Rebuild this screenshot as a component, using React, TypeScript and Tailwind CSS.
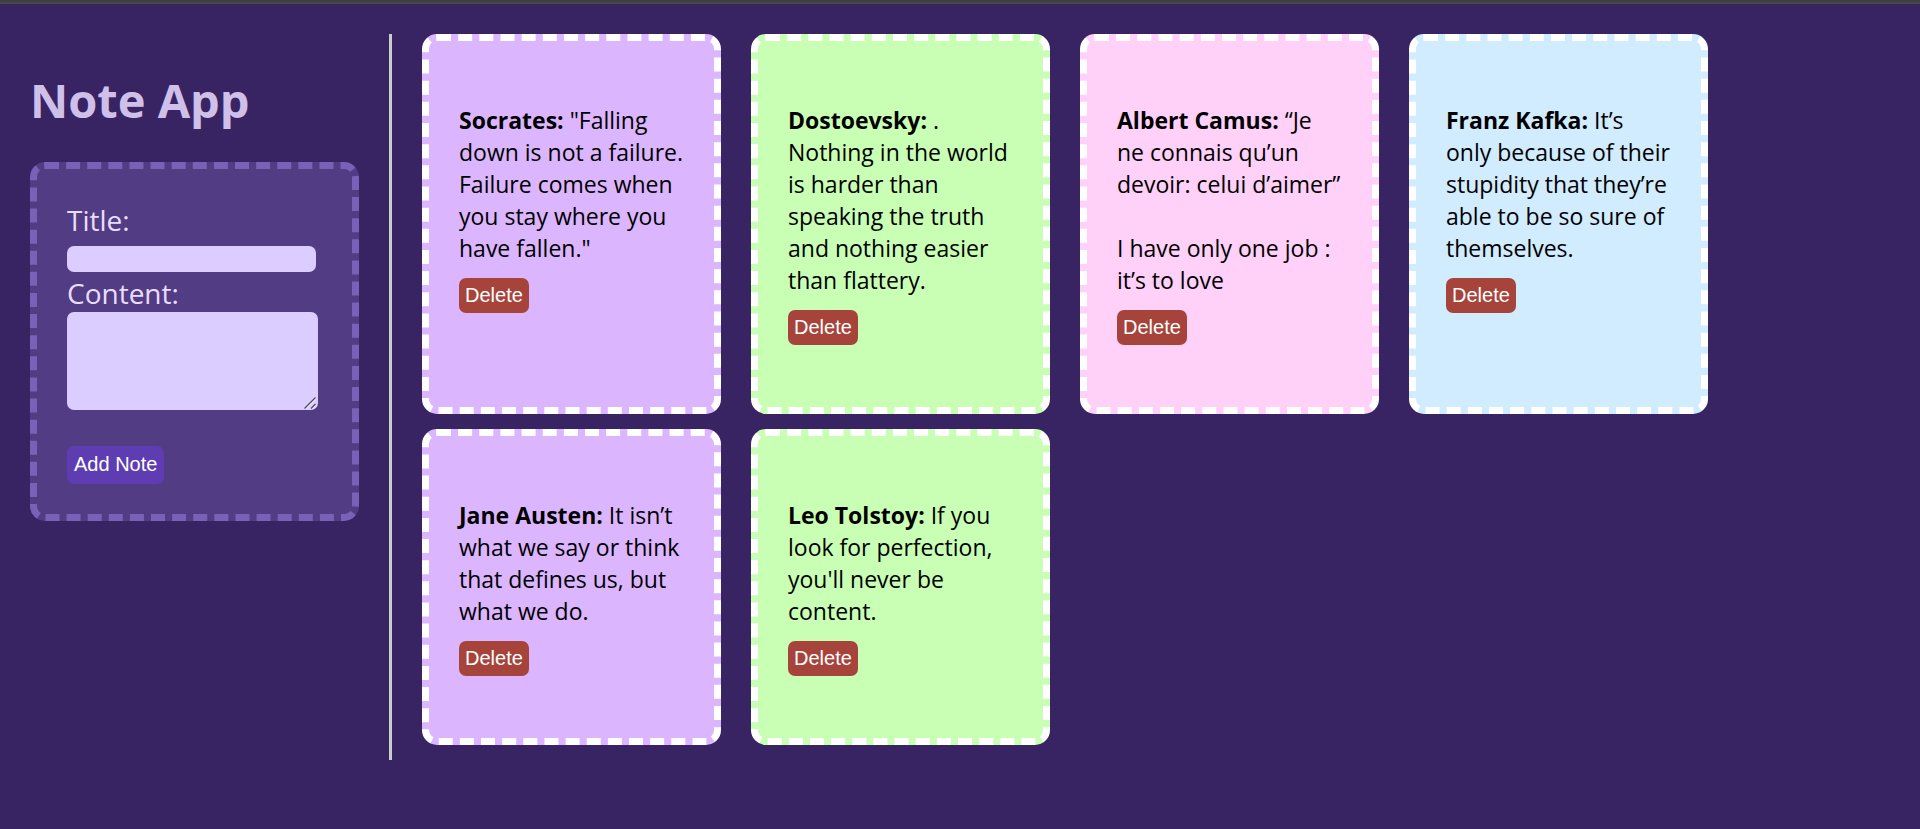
import { useState } from "react";
import type { FormEvent } from "react";

type Note = { id: number; title: string; content: string };

const initialNotes: Note[] = [
  {
    id: 1,
    title: "Socrates",
    content:
      '"Falling down is not a failure. Failure comes when you stay where you have fallen."',
  },
  {
    id: 2,
    title: "Dostoevsky",
    content:
      ".\nNothing in the world is harder than speaking the truth and nothing easier than flattery.",
  },
  {
    id: 3,
    title: "Albert Camus",
    content:
      "“Je ne connais qu’un devoir: celui d’aimer”\n\nI have only one job : it’s to love",
  },
  {
    id: 4,
    title: "Franz Kafka",
    content:
      "It’s only because of their stupidity that they’re able to be so sure of themselves.",
  },
  {
    id: 5,
    title: "Jane Austen",
    content: "It isn’t what we say or think that defines us, but what we do.",
  },
  {
    id: 6,
    title: "Leo Tolstoy",
    content: "If you look for perfection, you'll never be content.",
  },
];

const cardColors = ["bg-[#dcb5ff]", "bg-[#c8ffb5]", "bg-[#ffd1f8]", "bg-[#d1ebff]"];

function NoteCard({
  note,
  color,
  onDelete,
}: {
  note: Note;
  color: string;
  onDelete: () => void;
}) {
  return (
    <article
      className={`rounded-[15px] border-[7px] border-dashed border-white px-[30px] pt-[63px] pb-[62px] ${color}`}
    >
      <p className="text-[23px] leading-8 whitespace-pre-line text-black">
        <strong className="font-bold">{note.title}:</strong> {note.content}
      </p>
      <button
        type="button"
        onClick={onDelete}
        className="mt-3.5 block rounded-[7px] bg-[#a6443c] p-1.5 font-['Liberation_Sans',sans-serif] text-xl leading-[23px] text-white"
      >
        Delete
      </button>
    </article>
  );
}

export default function App() {
  const [notes, setNotes] = useState(initialNotes);
  const [title, setTitle] = useState("");
  const [content, setContent] = useState("");

  const addNote = (event: FormEvent) => {
    event.preventDefault();
    if (!title && !content) return;
    setNotes([...notes, { id: Date.now(), title, content }]);
    setTitle("");
    setContent("");
  };

  return (
    <div className="min-h-screen border-t-2 border-[#3f3f3f] bg-[#392463] font-['Open_Sans',sans-serif]">
      <div className="flex items-stretch border-t-2 border-[#484848] p-[30px]">
        <aside className="shrink-0 border-r-[3px] border-[#cccccc] pr-[30px]">
          <h1 className="mt-[34px] mb-[30px] text-[47px] leading-16 font-bold text-[#cfc0ea]">
            Note App
          </h1>
          <form
            onSubmit={addNote}
            className="flex w-[329px] flex-col items-start rounded-[15px] border-[7px] border-dashed border-[#7a61b8] bg-[#523c83] p-[30px] text-[28px] leading-[38px] text-[#e9dcff]"
          >
            <label htmlFor="title" className="pt-0.5">
              Title:
            </label>
            <input
              id="title"
              value={title}
              onChange={(e) => setTitle(e.target.value)}
              className="mt-[7px] h-[26px] w-[249px] rounded-[7px] bg-[#dbcdff] px-1 text-base text-black"
            />
            <label htmlFor="content" className="pt-0.5">
              Content:
            </label>
            <div className="relative h-[98px] w-[251px]">
              <textarea
                id="content"
                value={content}
                onChange={(e) => setContent(e.target.value)}
                className="block h-full w-full resize-none rounded-[7px] bg-[#dbcdff] p-1 text-base text-black"
              />
              <svg
                aria-hidden="true"
                viewBox="0 0 12 12"
                className="pointer-events-none absolute right-0.5 bottom-px h-3 w-3"
                fill="none"
                strokeWidth="1.2"
              >
                <path d="M1.5 12 12 1.5M8 12l4-4" stroke="#f4efff" />
                <path d="M0.5 11.5 11.5 0.5M7 11.5l4.5-4.5" stroke="#4b4658" />
              </svg>
            </div>
            <button
              type="submit"
              className="mt-9 rounded-[7px] bg-[#5e3db3] px-[7px] pt-1.5 pb-2 font-['Liberation_Sans',sans-serif] text-xl leading-6 text-white"
            >
              Add Note
            </button>
          </form>
        </aside>
        <main className="grid flex-1 grid-cols-[repeat(auto-fill,299px)] content-start gap-x-[30px] gap-y-[15px] pb-[15px] pl-[30px]">
          {notes.map((note, index) => (
            <NoteCard
              key={note.id}
              note={note}
              color={cardColors[index % cardColors.length]}
              onDelete={() => setNotes(notes.filter((n) => n.id !== note.id))}
            />
          ))}
        </main>
      </div>
    </div>
  );
}
